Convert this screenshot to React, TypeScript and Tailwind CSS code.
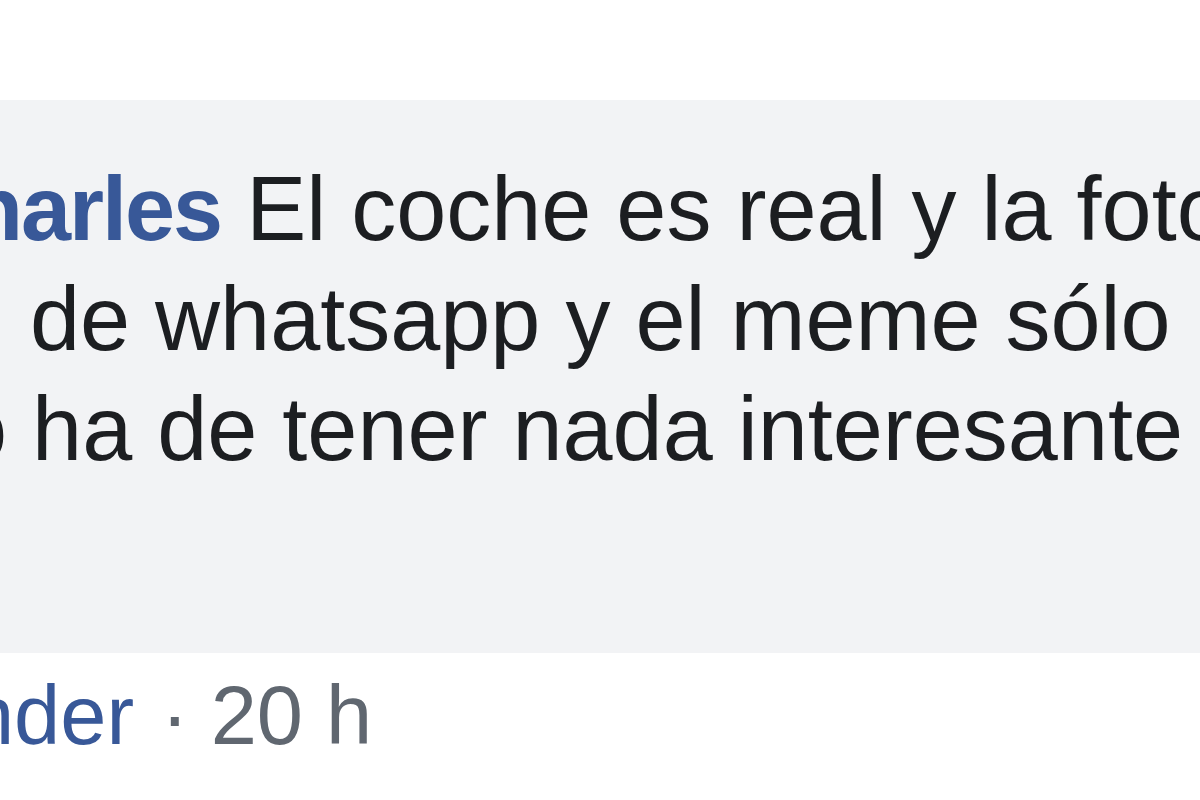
import React from 'react'

export default function App() {
  return (
    <div
      className="w-[1200px] h-[800px] overflow-hidden bg-white"
      style={{ fontFamily: '"Liberation Sans", Arial, sans-serif' }}
    >
      <div className="h-[100px]" />

      {/* comment bubble */}
      <div className="h-[553px] bg-[#f2f3f5] pt-[54px] text-[90px] leading-[110px] text-[#1c1e21]">
        <div className="whitespace-nowrap ml-[-95px]">
          <span className="font-bold tracking-[-2px] text-[#385898]">Charles</span> El coche es real y la fotografía es auténtica
        </div>
        <div className="whitespace-nowrap ml-[30px]">de whatsapp y el meme sólo</div>
        <div className="whitespace-nowrap ml-[-93px]">no ha de tener nada interesante</div>
      </div>

      {/* actions */}
      <div className="mt-[13px] flex items-baseline whitespace-nowrap text-[83px] leading-[100px]">
        <span className="ml-[-272px] text-[#385898]">Responder</span>
        <span className="ml-[27px] text-[#606770]">·</span>
        <span className="ml-[22px] text-[#606770]">20 h</span>
      </div>
    </div>
  )
}
